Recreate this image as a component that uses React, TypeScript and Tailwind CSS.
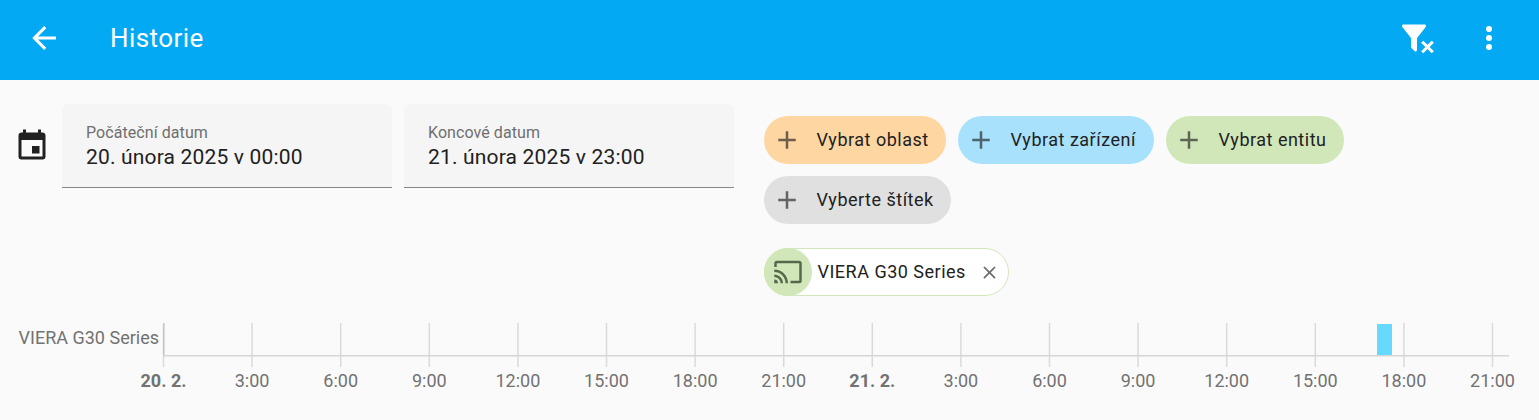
import clsx from 'clsx';

const icons = {
  back: 'M20,11V13H8L13.5,18.5L12.08,19.92L4.16,12L12.08,4.08L13.5,5.5L8,11H20Z',
  filterRemove:
    'M14.76,20.83L17.6,18L14.76,15.17L16.17,13.76L19,16.57L21.83,13.76L23.24,15.17L20.43,18L23.24,20.83L21.83,22.24L19,19.4L16.17,22.24L14.76,20.83M12,12V19.88C12.04,20.18 11.94,20.5 11.71,20.71C11.32,21.1 10.69,21.1 10.3,20.71L8.29,18.7C8.06,18.47 7.96,18.16 8,17.87V12H7.97L2.21,4.62C1.87,4.19 1.95,3.56 2.38,3.22C2.57,3.08 2.78,3 3,3V3H17V3C17.22,3 17.43,3.08 17.62,3.22C18.05,3.56 18.13,4.19 17.79,4.62L12.03,12H12Z',
  dots: 'M12,16A2,2 0 0,1 14,18A2,2 0 0,1 12,20A2,2 0 0,1 10,18A2,2 0 0,1 12,16M12,10A2,2 0 0,1 14,12A2,2 0 0,1 12,14A2,2 0 0,1 10,12A2,2 0 0,1 12,10M12,4A2,2 0 0,1 14,6A2,2 0 0,1 12,8A2,2 0 0,1 10,6A2,2 0 0,1 12,4Z',
  calendar:
    'M19,19H5V8H19M16,1V3H8V1H6V3H5C3.89,3 3,3.89 3,5V19A2,2 0 0,0 5,21H19A2,2 0 0,0 21,19V5C21,3.89 20.1,3 19,3H18V1M17,12H12V17H17V12Z',
  plus: 'M19,13H13V19H11V13H5V11H11V5H13V11H19V13Z',
  cast: 'M1,10V12A9,9 0 0,1 10,21H12C12,14.92 7.07,10 1,10M1,14V16A5,5 0 0,1 6,21H8A7,7 0 0,0 1,14M1,18V21H4A3,3 0 0,0 1,18M21,3H3C1.89,3 1,3.89 1,5V8H3V5H21V19H14V21H21A2,2 0 0,0 23,19V5C23,3.89 22.1,3 21,3Z',
  close: 'M19,6.41L17.59,5L12,10.59L6.41,5L5,6.41L10.59,12L5,17.59L6.41,19L12,13.41L17.59,19L19,17.59L13.41,12L19,6.41Z',
};

function Icon({ name, className }: { name: keyof typeof icons; className?: string }) {
  return (
    <svg viewBox="0 0 24 24" fill="currentColor" className={clsx('shrink-0', className)}>
      <path d={icons[name]} />
    </svg>
  );
}

function DateField({ label, value }: { label: string; value: string }) {
  return (
    <div className="flex h-21 w-[330px] flex-col rounded-t-md border-b border-[#868686] bg-[#f5f5f5] px-6 pt-[19px]">
      <span className="text-base/5 tracking-[0.07px] text-[#6f6f6f]">{label}</span>
      <span className="text-[21px]/[28px] tracking-[0.17px] text-[#212121]">{value}</span>
    </div>
  );
}

const pickers = [
  { label: 'Vybrat oblast', style: 'w-[182px] bg-[#fed6a2]' },
  { label: 'Vybrat zařízení', style: 'w-[196px] bg-[#a8e1fc]' },
  { label: 'Vybrat entitu', style: 'w-[178px] bg-[#d2e7b9]' },
  { label: 'Vyberte štítek', style: 'w-[187px] bg-[#e0e0e0]' },
];

const ticks = [
  '20. 2.', '3:00', '6:00', '9:00', '12:00', '15:00', '18:00', '21:00',
  '21. 2.', '3:00', '6:00', '9:00', '12:00', '15:00', '18:00', '21:00',
];

const tickX = (i: number) => 163.5 + i * 88.6;

function Timeline() {
  return (
    <svg width="1539" height="100" viewBox="0 320 1539 100" className="block">
      {ticks.map((label, i) => (
        <g key={i}>
          <rect x={tickX(i) - 0.75} y="323" width="1.5" height="44" fill="#dadada" />
          <text
            x={tickX(i)}
            y="387"
            textAnchor="middle"
            fontSize="18"
            fontWeight={label.endsWith('.') ? 700 : 400}
            fill="#727272"
          >
            {label}
          </text>
        </g>
      ))}
      <rect x="163" y="323" width="1.5" height="33" fill="#c4c4c4" />
      <rect x="163" y="355" width="1346" height="1.5" fill="#d6d6d6" />
      <rect x="1377" y="324" width="15" height="31" fill="#66d9ff" />
      <text x="159" y="344" textAnchor="end" fontSize="18" fill="#727272">
        VIERA G30 Series
      </text>
    </svg>
  );
}

export default function App() {
  return (
    <div className="h-[420px] w-[1539px] overflow-hidden bg-[#fafafa] font-[Roboto,sans-serif]">
      <header className="flex h-20 items-center bg-[#04a9f4] pr-8 pb-1 pl-[26px] text-white">
        <Icon name="back" className="size-9" />
        <h1 className="ml-12 flex-1 text-[26px] tracking-[0.42px]">Historie</h1>
        <Icon name="filterRemove" className="size-9" />
        <Icon name="dots" className="ml-9 size-9" />
      </header>

      <main className="flex h-60 pt-6 pl-3.5">
        <Icon name="calendar" className="mt-6 size-9 text-[#212121]" />
        <div className="ml-3 flex gap-3">
          <DateField label="Počáteční datum" value="20. února 2025 v 00:00" />
          <DateField label="Koncové datum" value="21. února 2025 v 23:00" />
        </div>

        <div className="ml-[30px] w-[640px] pt-3">
          <div className="flex flex-wrap gap-3">
            {pickers.map(({ label, style }) => (
              <button
                key={label}
                className={clsx('flex h-12 items-center rounded-full pl-2 text-lg tracking-[0.5px] whitespace-nowrap text-[#212121]', style)}
              >
                <Icon name="plus" className="mr-[14.5px] size-[30px] opacity-65" />
                {label}
              </button>
            ))}
          </div>
          <div className="mt-6 flex h-12 w-[245px] items-center rounded-full border border-[#d2e7b9] bg-white text-lg text-[#212121]">
            <span className="-ml-px flex size-12 shrink-0 items-center justify-center rounded-full bg-[#d2e7b9] text-[#56684b]">
              <Icon name="cast" className="size-[30px]" />
            </span>
            <span className="ml-[5.5px] flex-1 tracking-[0.5px] whitespace-nowrap">VIERA G30 Series</span>
            <Icon name="close" className="mr-2 size-[21px] text-[#6b6b6b]" />
          </div>
        </div>
      </main>

      <Timeline />
    </div>
  );
}
